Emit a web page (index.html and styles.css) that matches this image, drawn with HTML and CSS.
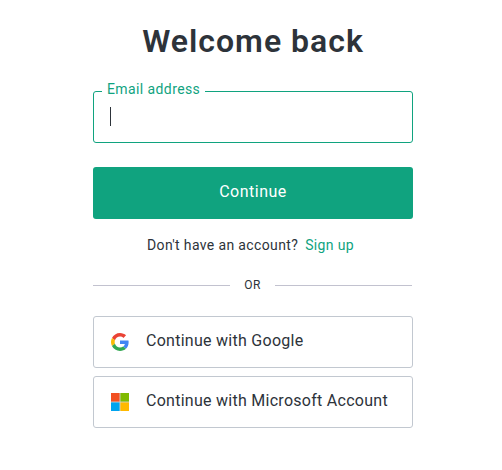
FILE: index.html
```html
<!DOCTYPE html>
<html lang="en">
<head>
  <meta charset="UTF-8" />
  <meta name="viewport" content="width=device-width, initial-scale=1.0" />
  <title>Welcome back</title>
  <link rel="stylesheet" href="styles.css">
</head>
<body>
  <main class="login">
    <h1>Welcome back</h1>

    <form class="login-form">
      <div class="field">
        <label for="email">Email address</label>
        <span class="caret"></span>
        <input type="email" id="email" name="email" autocomplete="username" />
      </div>
      <button type="submit" class="btn-primary">Continue</button>
    </form>

    <p class="signup"><span>Don't have an account?</span><a href="#">Sign up</a></p>

    <div class="divider"><span>OR</span></div>

    <div class="providers">
      <button type="button" class="btn-provider">
        <svg class="provider-icon" viewBox="0 0 48 48">
          <path fill="#EA4335" d="M24 9.5c3.54 0 6.71 1.22 9.21 3.6l6.85-6.85C35.9 2.38 30.47 0 24 0 14.62 0 6.51 5.38 2.56 13.22l7.98 6.19C12.43 13.72 17.74 9.5 24 9.5z"/>
          <path fill="#4285F4" d="M46.98 24.55c0-1.57-.15-3.09-.38-4.55H24v9.02h12.94c-.58 2.96-2.26 5.48-4.78 7.18l7.73 6c4.51-4.18 7.09-10.36 7.09-17.65z"/>
          <path fill="#FBBC05" d="M10.53 28.59c-.48-1.45-.76-2.99-.76-4.59s.27-3.14.76-4.59l-7.98-6.19C.92 16.46 0 20.12 0 24c0 3.88.92 7.54 2.56 10.78l7.97-6.19z"/>
          <path fill="#34A853" d="M24 48c6.48 0 11.93-2.13 15.89-5.81l-7.73-6c-2.15 1.45-4.92 2.3-8.16 2.3-6.26 0-11.57-4.22-13.47-9.91l-7.98 6.19C6.51 42.62 14.62 48 24 48z"/>
        </svg>
        <span>Continue with Google</span>
      </button>
      <button type="button" class="btn-provider">
        <svg class="provider-icon" viewBox="0 0 21 21">
          <path fill="#d3d3d3" d="M0 0h21v21H0z"/>
          <path fill="#f25022" d="M0 0h10v10H0z"/>
          <path fill="#7fba00" d="M11 0h10v10H11z"/>
          <path fill="#00a4ef" d="M0 11h10v10H0z"/>
          <path fill="#ffb900" d="M11 11h10v10H11z"/>
        </svg>
        <span>Continue with Microsoft Account</span>
      </button>
    </div>
  </main>
</body>
</html>
```
FILE: styles.css
```css
:root {
  --primary: #10a37f;
  --text: #2d333a;
  --border: #c2c8d0;
}

* {
  box-sizing: border-box;
  margin: 0;
  padding: 0;
  font-family: Roboto, sans-serif;
}

body {
  background: #fff;
  color: var(--text);
}

.login {
  width: 320px;
  margin: 0 89px 0 93px;
  padding-top: 20px;
}

h1 {
  height: 71px;
  font-size: 32px;
  line-height: 42px;
  font-weight: 600;
  letter-spacing: 1px;
  text-align: center;
  white-space: nowrap;
}

.field {
  position: relative;
  height: 52px;
  margin-bottom: 24px;
}

.field label {
  position: absolute;
  top: -11px;
  left: 9px;
  width: 103px;
  padding-left: 5px;
  background: #fff;
  color: var(--primary);
  font-size: 14px;
  line-height: 18px;
  letter-spacing: 0.4px;
  white-space: nowrap;
}

.field input {
  display: block;
  width: 100%;
  height: 100%;
  padding: 0 16px;
  border: 1px solid var(--primary);
  border-radius: 3px;
  outline: none;
  color: var(--text);
  font-size: 16px;
}

.caret {
  position: absolute;
  top: 16px;
  left: 17px;
  width: 1px;
  height: 19px;
  background: var(--text);
}

.btn-primary {
  display: block;
  width: 100%;
  height: 52px;
  padding-bottom: 3px;
  border: none;
  border-radius: 3px;
  background: var(--primary);
  color: #fff;
  font-size: 16px;
  letter-spacing: 0.5px;
  cursor: pointer;
}

.signup {
  display: flex;
  gap: 7px;
  margin-top: 16px;
  padding-left: 54px;
  font-size: 14px;
  line-height: 20px;
  letter-spacing: 0.36px;
  white-space: nowrap;
}

.signup a {
  color: var(--primary);
  text-decoration: none;
}

.divider {
  display: flex;
  align-items: center;
  height: 20px;
  margin: 20px 1px 0 0;
  font-size: 12px;
  letter-spacing: 0.3px;
}

.divider::before,
.divider::after {
  content: "";
  flex: 1;
  height: 1px;
  background: #c2c2cf;
}

.divider span {
  width: 45px;
  text-align: center;
}

.providers {
  display: grid;
  gap: 8px;
  margin-top: 21px;
}

.btn-provider {
  display: flex;
  align-items: center;
  gap: 17px;
  height: 52px;
  padding: 0 17px;
  border: 1px solid var(--border);
  border-radius: 3px;
  background: #fff;
  color: var(--text);
  font-size: 16px;
  letter-spacing: 0.27px;
  white-space: nowrap;
  cursor: pointer;
}

.btn-provider span {
  padding-bottom: 3px;
}

.provider-icon {
  width: 18px;
  height: 18px;
}
```
